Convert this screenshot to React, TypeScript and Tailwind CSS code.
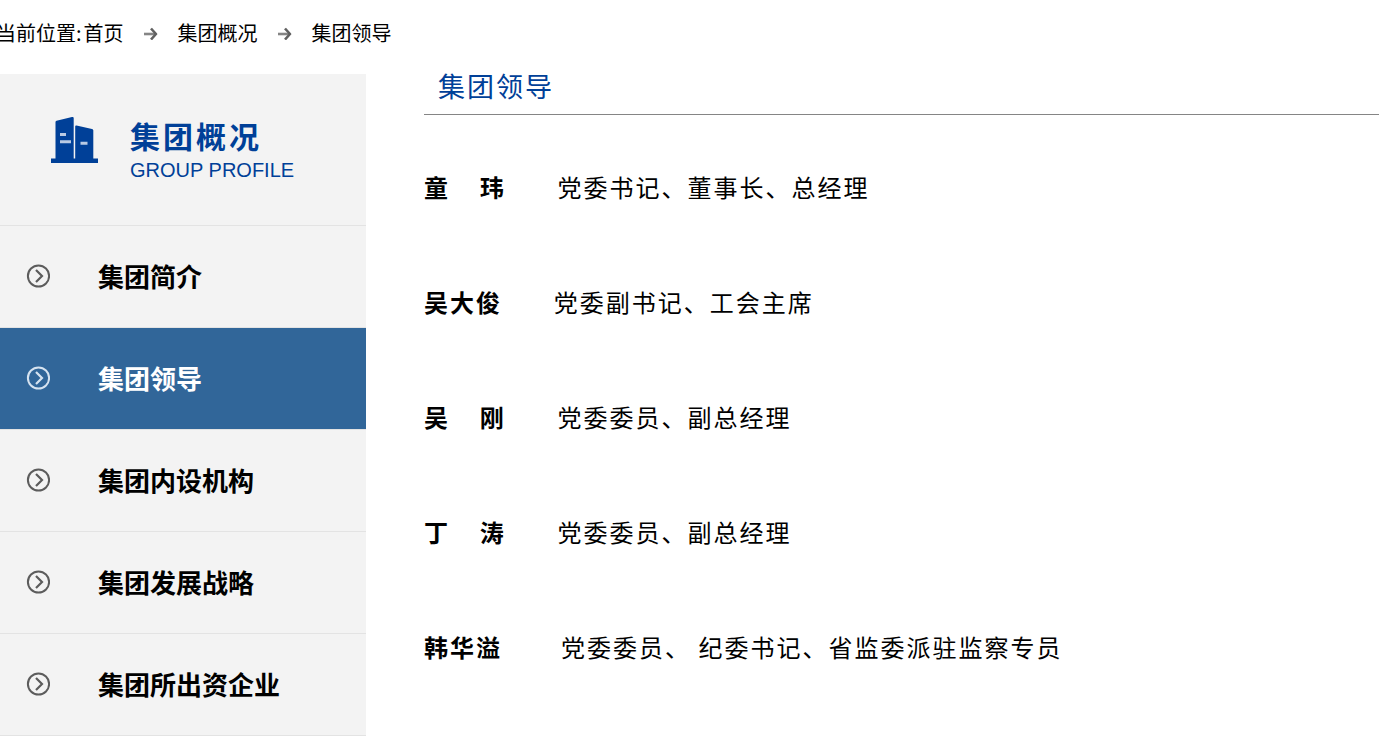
const menu = [
  { label: '集团简介' },
  { label: '集团领导', active: true },
  { label: '集团内设机构' },
  { label: '集团发展战略' },
  { label: '集团所出资企业' },
];

const leaders = [
  { name: '童\u00a0\u00a0\u00a0\u00a0玮', gap: 7, duty: '党委书记、董事长、总经理' },
  { name: '吴大俊', gap: 7, duty: '党委副书记、工会主席' },
  { name: '吴\u00a0\u00a0\u00a0\u00a0刚', gap: 7, duty: '党委委员、副总经理' },
  { name: '丁\u00a0\u00a0\u00a0\u00a0涛', gap: 7, duty: '党委委员、副总经理' },
  { name: '韩华溢', gap: 8, duty: '党委委员、\u00a0纪委书记、省监委派驻监察专员' },
];

function Arrow() {
  return (
    <svg className="mx-5 h-[14px] w-[14px] shrink-0" viewBox="0 0 14 14" fill="none">
      <path d="M0 8h11" stroke="#858585" strokeWidth="2.6" />
      <path d="M7 2.500l5 5.500-5 5.500" stroke="#606060" strokeWidth="2.6" strokeLinejoin="round" />
    </svg>
  );
}

function CircleArrow() {
  return (
    <svg className="h-6 w-6 shrink-0" viewBox="0 0 24 24" fill="none" stroke="currentColor" strokeWidth="2.2">
      <circle cx="12.5" cy="12" r="10.600" strokeWidth="2" />
      <path d="M10 6l6 6-6 6" />
    </svg>
  );
}

function Building() {
  return (
    <svg className="h-[46px] w-[47px] shrink-0" viewBox="0 0 47 46">
      <path fill="#004098" d="M0 41.500h4.500V5q0-1 1-1.300L21 .1q1.700-.3 1.700 1V41.500h1.500V9.500q0-1.300 1.300-1L41 12q1.300.3 1.300 1.300V41.500H47V46H0z" />
      <path stroke="#b9cae3" strokeWidth="3" d="M9 17.600h6M9 24.800h11M29.500 26.200h7" />
    </svg>
  );
}

export default function App() {
  return (
    <div className="overflow-hidden bg-white font-['Noto_Sans_CJK_SC','Liberation_Sans',sans-serif] text-black">
      <nav className="-ml-1 flex items-center pt-[18px] text-[20px] leading-[30px] whitespace-nowrap">
        <span className="mr-0.5">当前位置:</span>
        <a href="#">首页</a>
        <Arrow />
        <a href="#">集团概况</a>
        <Arrow />
        <a href="#">集团领导</a>
      </nav>

      <div className="flex items-start">
        <aside className="mt-[26px] w-[366px] shrink-0 bg-[#f3f3f3]">
          <div className="flex h-[152px] items-start gap-8 border-b border-[#e3e3e3] pt-[43px] pl-[51px]">
            <Building />
            <div className="text-[#004098]">
              <h2 className="text-[30px] leading-9 font-bold tracking-[3px]">集团概况</h2>
              <p className="font-['Liberation_Sans',Arial,sans-serif] text-[20px] leading-[34px]">GROUP PROFILE</p>
            </div>
          </div>
          <ul>
            {menu.map(item => (
              <li key={item.label}>
                <a
                  href="#"
                  className={`flex h-[102px] items-center gap-12 border-b border-[#e3e3e3] pb-px pl-[26px] ${
                    item.active ? 'bg-[#316699] text-[#d6e3f0]' : 'text-[#5c5c5c]'
                  }`}
                >
                  <CircleArrow />
                  <span className={`text-[26px] leading-9 font-bold ${item.active ? 'text-white' : 'text-black'}`}>{item.label}</span>
                </a>
              </li>
            ))}
          </ul>
        </aside>

        <main className="ml-[58px] min-w-0 flex-1 pt-5">
          <h1 className="border-b border-[#858585] pb-[10px] pl-[14px] text-[27px] leading-9 tracking-[2px] text-[#004098]">集团领导</h1>
          <div className="mt-[52px] space-y-[75px] text-[24px] leading-10 tracking-[2px]">
            {leaders.map(person => (
              <p key={person.name}>
                <strong>{person.name}</strong>
                {'\u00a0'.repeat(person.gap)}
                {person.duty}
              </p>
            ))}
          </div>
        </main>
      </div>
    </div>
  );
}
